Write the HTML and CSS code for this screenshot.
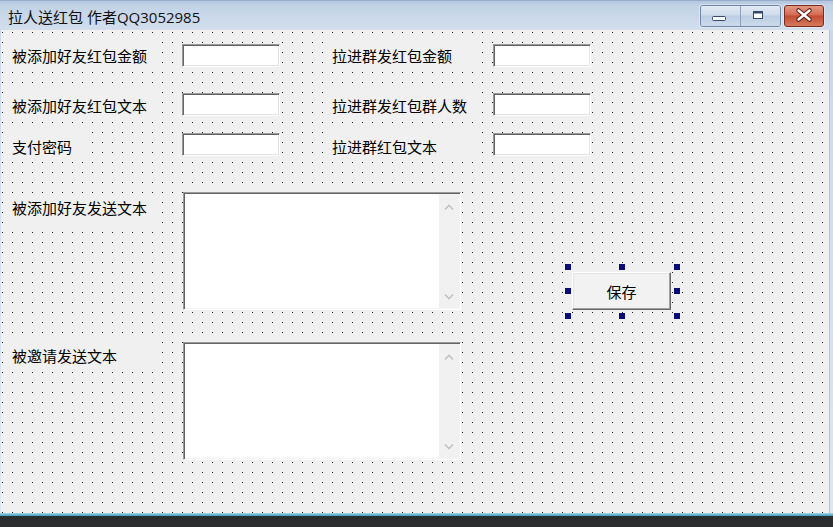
FILE: index.html
```html
<!DOCTYPE html>
<html lang="zh-CN">
<head>
<meta charset="utf-8">
<title>拉人送红包 作者QQ3052985</title>
<link rel="stylesheet" href="styles.css">
</head>
<body>
<div class="window">
  <div class="titlebar">
    <span class="title">拉人送红包 作者QQ3052985</span>
    <div class="caption">
      <div class="cgroup">
        <div class="cbtn cmin">
          <svg width="39" height="20" viewBox="0 0 39 20"><rect x="11.5" y="10.5" width="13" height="4" rx="1" fill="#fff" stroke="#34496a" stroke-width="1"/></svg>
        </div>
        <div class="cbtn cmax">
          <svg width="39" height="20" viewBox="0 0 39 20"><rect x="12.5" y="5.5" width="9" height="7" fill="#fff" stroke="#34496a" stroke-width="1"/><rect x="13" y="6" width="8" height="1.5" fill="#34496a"/></svg>
        </div>
      </div>
      <div class="cbtn cclose">
        <svg width="38" height="20" viewBox="0 0 38 20"><path d="M13.5 4.5 L24.5 13.5 M24.5 4.5 L13.5 13.5" stroke="#5b1c12" stroke-width="4.5" stroke-linecap="round" fill="none"/><path d="M13.5 4.5 L24.5 13.5 M24.5 4.5 L13.5 13.5" stroke="#fff" stroke-width="2.4" stroke-linecap="round" fill="none"/></svg>
      </div>
    </div>
  </div>

  <div class="client">
    <div class="frow r1">
      <div class="lbl lbl-l">被添加好友红包金额</div>
      <div class="edit edit-l"></div>
      <div class="lbl lbl-r">拉进群发红包金额</div>
      <div class="edit edit-r"></div>
    </div>
    <div class="frow r2">
      <div class="lbl lbl-l">被添加好友红包文本</div>
      <div class="edit edit-l"></div>
      <div class="lbl lbl-r">拉进群发红包群人数</div>
      <div class="edit edit-r"></div>
    </div>
    <div class="frow r3">
      <div class="lbl lbl-l lbl-short">支付密码</div>
      <div class="edit edit-l"></div>
      <div class="lbl lbl-r">拉进群红包文本</div>
      <div class="edit edit-r"></div>
    </div>

    <div class="mrow m1">
      <div class="lbl lbl-l">被添加好友发送文本</div>
      <div class="memo">
        <div class="vscroll">
          <svg width="10" height="8" viewBox="0 0 10 8"><path d="M1 6.5 L5 2.5 L9 6.5" stroke="#c2c2c2" stroke-width="1.6" fill="none"/></svg>
          <svg width="10" height="8" viewBox="0 0 10 8"><path d="M1 1.5 L5 5.5 L9 1.5" stroke="#c2c2c2" stroke-width="1.6" fill="none"/></svg>
        </div>
      </div>
      <div class="selframe">
        <button class="savebtn">保存</button>
        <span class="handle h-tl"></span>
        <span class="handle h-tm"></span>
        <span class="handle h-tr"></span>
        <span class="handle h-ml"></span>
        <span class="handle h-mr"></span>
        <span class="handle h-bl"></span>
        <span class="handle h-bm"></span>
        <span class="handle h-br"></span>
      </div>
    </div>

    <div class="mrow m2">
      <div class="lbl lbl-l">被邀请发送文本</div>
      <div class="memo">
        <div class="vscroll">
          <svg width="10" height="8" viewBox="0 0 10 8"><path d="M1 6.5 L5 2.5 L9 6.5" stroke="#c2c2c2" stroke-width="1.6" fill="none"/></svg>
          <svg width="10" height="8" viewBox="0 0 10 8"><path d="M1 1.5 L5 5.5 L9 1.5" stroke="#c2c2c2" stroke-width="1.6" fill="none"/></svg>
        </div>
      </div>
    </div>
  </div>

  <div class="bottomline"></div>
  <div class="desk"></div>
</div>
</body>
</html>
```

FILE: styles.css
```css
body {
  margin: 0;
  width: 833px;
  height: 527px;
  overflow: hidden;
  background: #2b2d2f;
  font-family: "Noto Sans CJK SC", sans-serif;
}

.window {
  display: flex;
  flex-direction: column;
  width: 833px;
  height: 527px;
  background: linear-gradient(#c9d8ea, #dce7f1);
}

/* ---------- title bar ---------- */
.titlebar {
  flex: none;
  height: 30px;
  display: flex;
  align-items: flex-start;
  background: linear-gradient(#b0c4dd 0, #c3d3e7 6px, #d2deec 30px);
  box-shadow: inset 0 1px 0 #97adc9;
}

.title {
  margin: 8px 0 0 8px;
  font: 15px/18px "Open Sans", "Noto Sans CJK SC", sans-serif;
  color: #111;
  white-space: nowrap;
}

.caption {
  margin: 5px 9px 0 auto;
  display: flex;
  gap: 3px;
  height: 22px;
}

.cgroup {
  display: flex;
  width: 81px;
  height: 22px;
  box-sizing: border-box;
  border: 1px solid #7088a8;
  border-radius: 3px;
  overflow: hidden;
  box-shadow: 0 0 0 1px rgba(255, 255, 255, 0.35);
}

.cbtn {
  display: flex;
}

.cmin,
.cmax {
  width: 39px;
  height: 20px;
  background: linear-gradient(#e2eaf4, #cfdbea 45%, #bccde3 50%, #cddbeb);
}

.cmin {
  border-right: 1px solid #8ea2bf;
}

.cclose {
  width: 40px;
  height: 22px;
  box-sizing: border-box;
  border: 1px solid #7d2a1d;
  border-radius: 3px;
  background: linear-gradient(#e49a86, #d36a52 45%, #c24a33 50%, #d47a5f);
  box-shadow: 0 0 0 1px rgba(255, 255, 255, 0.35);
}

/* ---------- client (designer canvas) ---------- */
.client {
  flex: none;
  height: 483px;
  margin: 0 4px 0 1px;
  padding: 11px 0 0 7px;
  box-sizing: border-box;
  background-color: #f0f0f0;
  background-image: conic-gradient(from 0deg at 1px 1px, transparent 0deg 270deg, #1e1e1e 270deg 360deg);
  background-size: 10px 10px;
  background-position: 1px 2px;
  box-shadow: 1px 0 0 #9ccde0;
}

.frow {
  display: flex;
  align-items: flex-start;
  height: 30px;
}

.r2 { margin-top: 20px; }
.r3 { margin-top: 11px; }

.lbl {
  height: 30px;
  box-sizing: border-box;
  padding-left: 4px;
  line-height: 30px;
  font-size: 15px;
  color: #000;
  background: #f0f0f0;
  white-space: nowrap;
}

.lbl-l { width: 147px; }
.lbl-short { width: 80px; margin-right: 67px; }

.lbl-r {
  width: 146px;
  margin-left: 49px;
  padding-left: 3px;
}

.edit {
  width: 98px;
  height: 23px;
  box-sizing: border-box;
  background: #fff;
  border: 1px solid;
  border-color: #9a9a9a #fff #fff #9a9a9a;
  box-shadow: inset 1px 1px 0 #646464, inset -1px -1px 0 #e3e3e3;
}

.edit-l { margin-left: 27px; }
.edit-r { margin-left: 18px; }

.r1 .edit { margin-top: 3px; }
.r2 .edit { margin-top: 2px; }
.r3 .edit { margin-top: 1px; }

/* ---------- multi-line edit boxes ---------- */
.mrow {
  display: flex;
  align-items: flex-start;
  height: 118px;
}

.m1 { margin-top: 30px; }
.m2 { margin-top: 32px; }
.m1 .lbl { margin-top: 1px; }
.m2 .lbl { margin-top: -1px; }

.memo {
  margin-left: 28px;
  width: 278px;
  height: 118px;
  box-sizing: border-box;
  display: flex;
  justify-content: flex-end;
  background: #fff;
  border: 1px solid;
  border-color: #9a9a9a #fff #fff #9a9a9a;
  box-shadow: inset 1px 1px 0 #646464, inset -1px -1px 0 #f4f4f4;
}

.vscroll {
  width: 20px;
  margin: 1px 1px 1px 0;
  box-sizing: border-box;
  padding: 9px 0 7px;
  display: flex;
  flex-direction: column;
  justify-content: space-between;
  align-items: center;
  background: #f1f1f1;
}

/* ---------- selected button ---------- */
.selframe {
  position: relative;
  margin: 72px 0 0 104px;
  padding: 8px 9px 9px 7px;
}

.savebtn {
  display: block;
  width: 99px;
  height: 38px;
  margin: 0;
  padding: 0;
  box-sizing: border-box;
  font: 15px/1 "Noto Sans CJK SC", sans-serif;
  color: #000;
  background: #f2f2f2;
  border: 1px solid;
  border-color: #fff #696969 #696969 #fff;
  box-shadow: inset -1px -1px 0 #a0a0a0, inset 1px 1px 0 #e3e3e3;
}

.handle {
  position: absolute;
  width: 6px;
  height: 6px;
  background: #0c0c74;
}

.h-tl { left: 0; top: 0; }
.h-tm { left: 54px; top: 0; }
.h-tr { left: 109px; top: 0; }
.h-ml { left: 0; top: 24px; }
.h-mr { left: 109px; top: 24px; }
.h-bl { left: 0; top: 49px; }
.h-bm { left: 54px; top: 49px; }
.h-br { left: 109px; top: 49px; }

/* ---------- bottom edge ---------- */
.bottomline {
  flex: none;
  height: 3px;
  background: linear-gradient(#a6d8e6, #3f9bb8);
}

.desk {
  flex: 1;
  background: #2b2d2f;
}
```
